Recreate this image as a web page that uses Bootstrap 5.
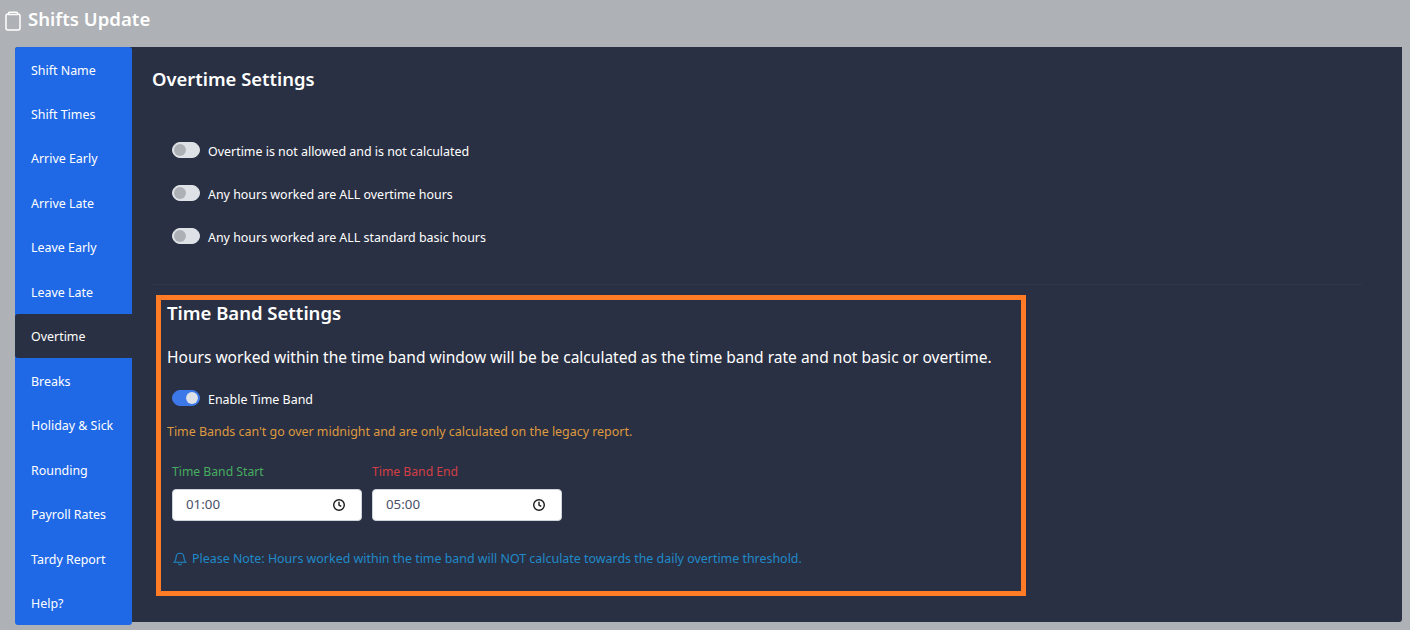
<!DOCTYPE html>
<html lang="en">
<head>
<meta charset="utf-8">
<title>Shifts Update</title>
<link href="https://cdn.jsdelivr.net/npm/bootstrap@5.3.0/dist/css/bootstrap.min.css" rel="stylesheet">
<style>
html,body{height:630px;overflow:hidden}
body{background:#aeb1b5;font-family:"Noto Sans",sans-serif;font-size:12.43px;color:#fff}
.page-head{height:47px;padding:6px 0 0 5px;gap:7px}
.page-head h1{font-size:18.6px;font-weight:600;margin:0;line-height:26px}
.page-head svg{margin-top:5px}
.shell{margin-left:15px;width:1387px;height:575px;background:#2a3043;border-radius:3px 0 3px 0}
.side{width:117px;flex:none;height:578px;background:#1f69e6;border-radius:3px;display:flex;flex-direction:column}
.side a{flex:1 1 0;color:#fff;text-decoration:none;padding:3.3px 0 0 16px;display:flex;align-items:center}
.side a.on{background:#2a3043;border-radius:3px 0 0 3px}
.main{flex:1;padding:19px 40px 0 20px;min-width:0}
.main h2{font-size:18.4px;font-weight:600;margin:0;line-height:25px}
.opts{padding:52px 0 0 20px}
.opt{height:43px;display:flex;align-items:flex-start}
.form-switch.sw{padding-left:36px;min-height:0;margin:0;display:flex;align-items:center;height:18px}
.form-switch.sw .form-check-input{width:28px;height:16px;margin:-4px 0 0 -36px;background-color:#dee2e6;border-color:#dee2e6;flex:none;background-image:url("data:image/svg+xml,%3csvg xmlns='http://www.w3.org/2000/svg' viewBox='-4 -4 8 8'%3e%3ccircle r='3.4' fill='%23adb0b5'/%3e%3c/svg%3e")}
.form-switch.sw .form-check-input:checked{background-color:#3d78e8;border-color:#3d78e8;background-image:url("data:image/svg+xml,%3csvg xmlns='http://www.w3.org/2000/svg' viewBox='-4 -4 8 8'%3e%3ccircle r='3.4' fill='%23dee2e6'/%3e%3c/svg%3e")}
.sw label{color:#fff;margin-left:8px}
.rule{border-top:1px solid #30354a;margin:12px 0 0;height:0}
.band{width:870px;height:301px;margin:10px 0 0 4px;border:5px solid #ff7b26;padding:0 6px}
.band h3{font-size:18.5px;font-weight:600;margin:0;line-height:25px}
.band p.lede{font-size:15.54px;margin:20px 0 0;line-height:24px;white-space:nowrap}
.sw-row{padding:22px 0 0 5px}
.warn{color:#de9a3f;margin:14px 0 0;line-height:18px}
.times{gap:10px;padding:22px 0 0 5px}
.tfield{width:190px}
.tfield label{display:block;line-height:18px;margin-bottom:8px;font-size:12.2px}
.lab-g{color:#46ad60}
.lab-r{color:#d33f45}
.tbox{height:32px;background:#fff;border:1px solid #ced4da;border-radius:4px;padding:0 15px 0 13px;color:#495067;font-size:13.3px}
.note{color:#1f8ac9;margin:29px 0 0 6px;gap:5px;line-height:18px}
</style>
</head>
<body>
<div class="page-head d-flex align-items-start">
  <svg width="16" height="20" viewBox="0 0 16 20" fill="none" stroke="#fff" stroke-width="1.5"><rect x="1" y="3" width="14" height="16" rx="2"/><path d="M3.5 3.5V2.2c0-.5.4-.9.9-.9h7.2c.5 0 .9.4.9.9v1.3z" fill="#aeb1b5"/></svg>
  <h1>Shifts Update</h1>
</div>
<div class="shell d-flex">
  <nav class="side">
    <a href="#">Shift Name</a>
    <a href="#">Shift Times</a>
    <a href="#">Arrive Early</a>
    <a href="#">Arrive Late</a>
    <a href="#">Leave Early</a>
    <a href="#">Leave Late</a>
    <a href="#" class="on">Overtime</a>
    <a href="#">Breaks</a>
    <a href="#">Holiday &amp; Sick</a>
    <a href="#">Rounding</a>
    <a href="#">Payroll Rates</a>
    <a href="#">Tardy Report</a>
    <a href="#">Help?</a>
  </nav>
  <main class="main">
    <h2>Overtime Settings</h2>
    <div class="opts">
      <div class="opt"><div class="form-check form-switch sw"><input class="form-check-input" type="checkbox" id="o1"><label class="form-check-label" for="o1">Overtime is not allowed and is not calculated</label></div></div>
      <div class="opt"><div class="form-check form-switch sw"><input class="form-check-input" type="checkbox" id="o2"><label class="form-check-label" for="o2">Any hours worked are ALL overtime hours</label></div></div>
      <div class="opt"><div class="form-check form-switch sw"><input class="form-check-input" type="checkbox" id="o3"><label class="form-check-label" for="o3">Any hours worked are ALL standard basic hours</label></div></div>
    </div>
    <div class="rule"></div>
    <section class="band">
      <h3>Time Band Settings</h3>
      <p class="lede">Hours worked within the time band window will be be calculated as the time band rate and not basic or overtime.</p>
      <div class="sw-row"><div class="form-check form-switch sw"><input class="form-check-input" type="checkbox" id="tb" checked><label class="form-check-label" for="tb">Enable Time Band</label></div></div>
      <p class="warn">Time Bands can't go over midnight and are only calculated on the legacy report.</p>
      <div class="times d-flex">
        <div class="tfield"><label class="lab-g">Time Band Start</label>
          <div class="tbox d-flex align-items-center justify-content-between"><span>01:00</span>
            <svg width="14" height="14" viewBox="0 0 14 14" fill="none" stroke="#1a1a1a" stroke-width="1.4"><circle cx="7" cy="7" r="5.3"/><path d="M7 3.8V7l2.2 1.4"/></svg></div></div>
        <div class="tfield"><label class="lab-r">Time Band End</label>
          <div class="tbox d-flex align-items-center justify-content-between"><span>05:00</span>
            <svg width="14" height="14" viewBox="0 0 14 14" fill="none" stroke="#1a1a1a" stroke-width="1.4"><circle cx="7" cy="7" r="5.3"/><path d="M7 3.8V7l2.2 1.4"/></svg></div></div>
      </div>
      <div class="note d-flex align-items-center">
        <svg width="14" height="14" viewBox="0 0 14 14" fill="none" stroke="#1f8ac9" stroke-width="1.1"><path d="M7 1.2c-2.4 0-3.9 1.8-3.9 4 0 3-1.4 4.4-2 5.1h11.8c-.6-.7-2-2.1-2-5.1 0-2.2-1.5-4-3.9-4z"/><path d="M5.4 11.5c.2.9.8 1.4 1.6 1.4s1.4-.5 1.6-1.4"/></svg>
        <span>Please Note: Hours worked within the time band will NOT calculate towards the daily overtime threshold.</span>
      </div>
    </section>
  </main>
</div>
<script src="https://cdn.jsdelivr.net/npm/bootstrap@5.3.0/dist/js/bootstrap.bundle.min.js"></script>
</body>
</html>
